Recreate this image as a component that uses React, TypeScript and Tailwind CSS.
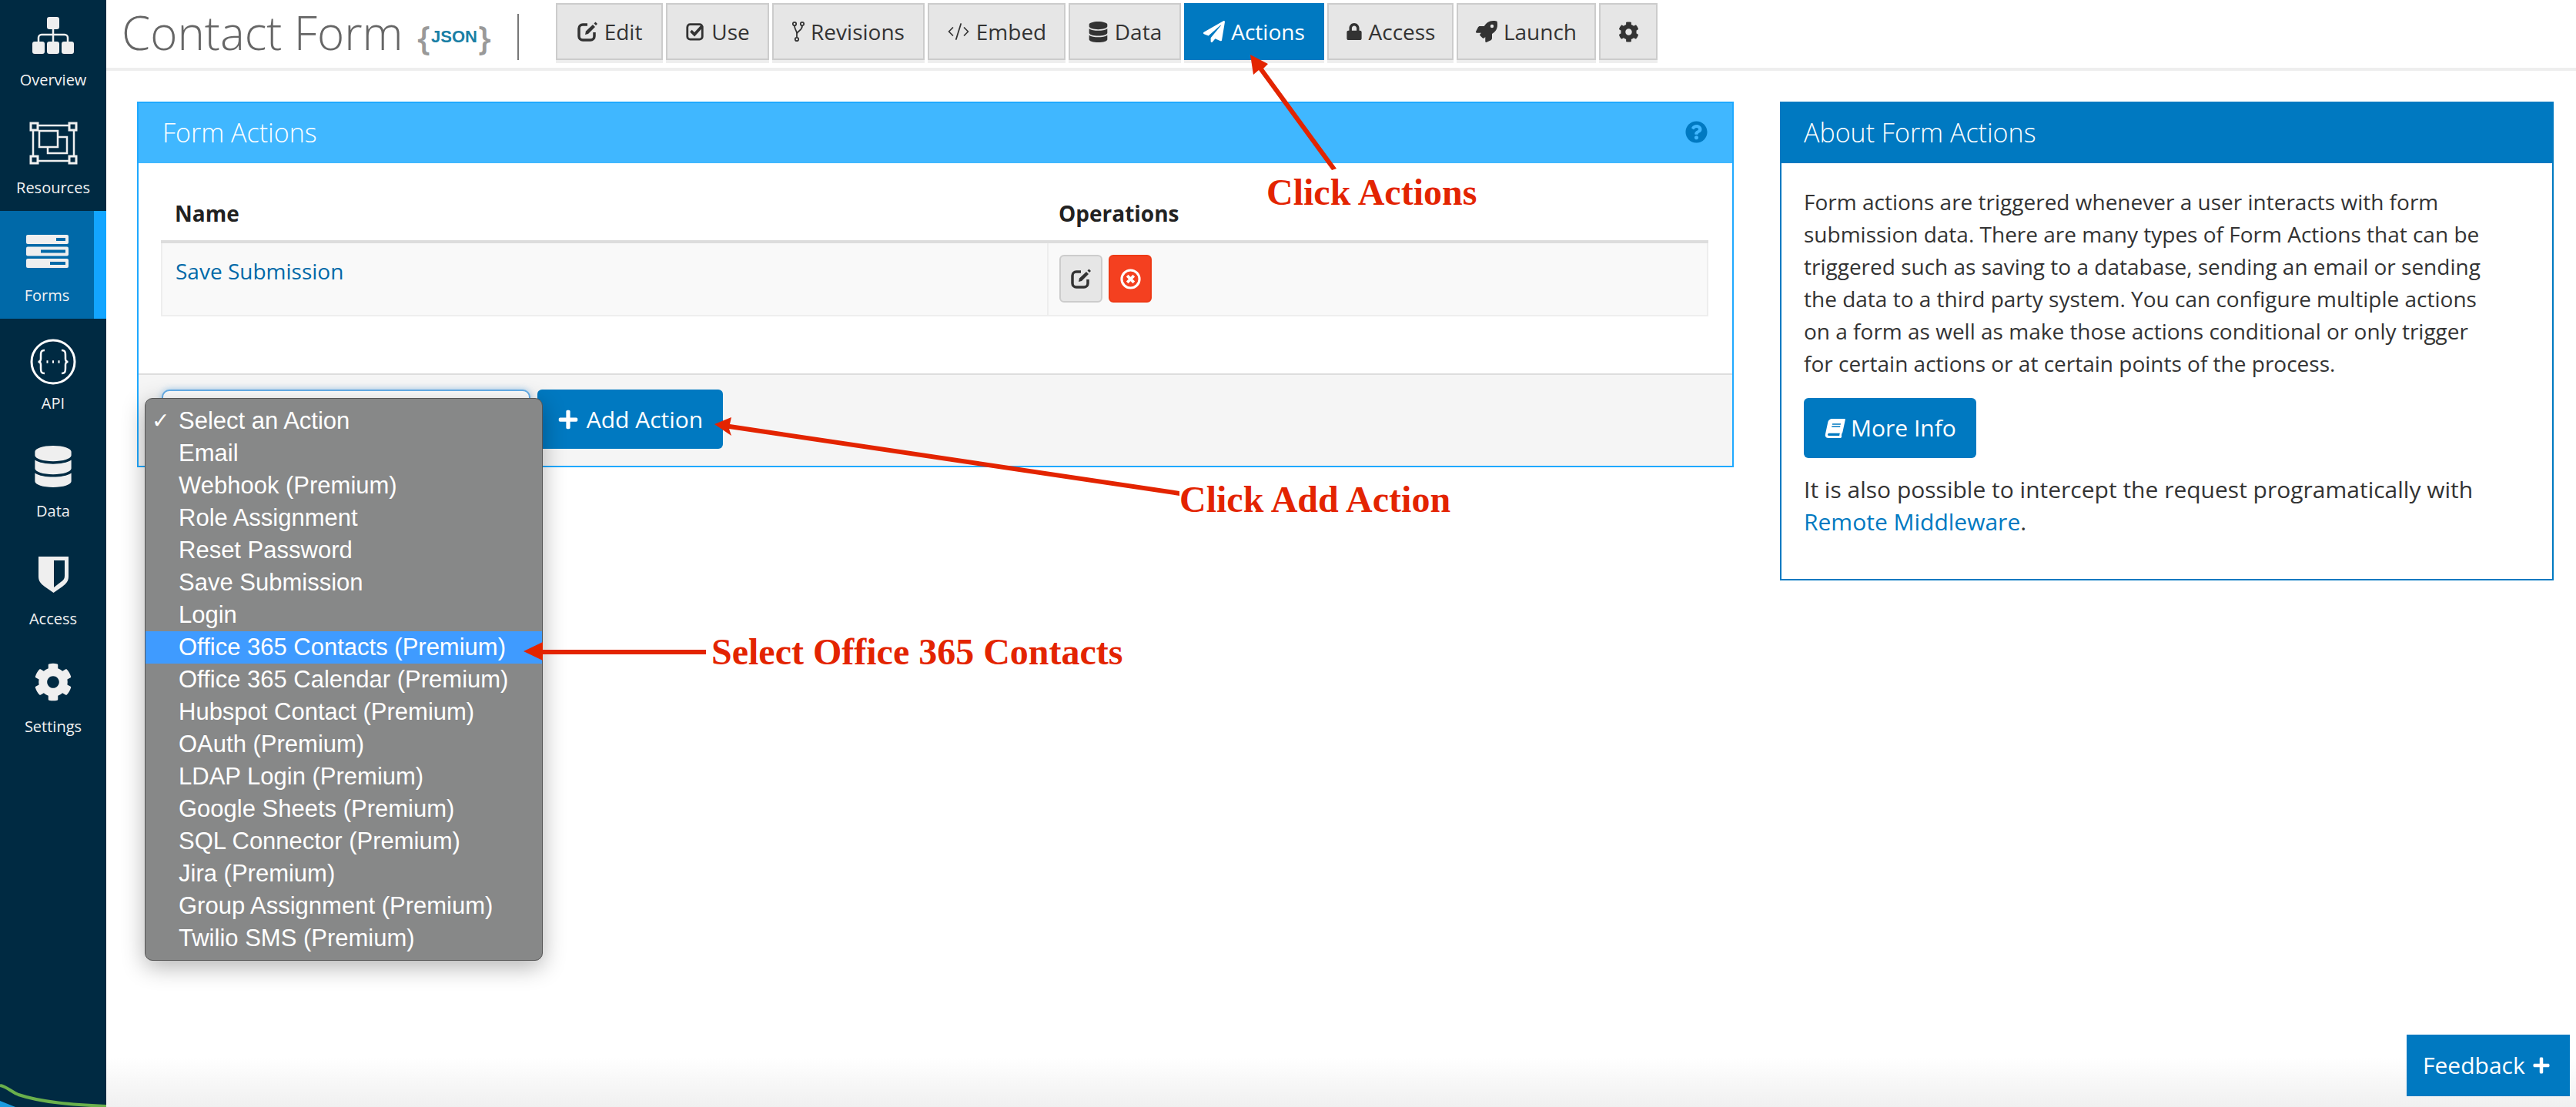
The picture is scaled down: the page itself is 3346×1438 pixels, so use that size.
import React from "react";
import {
  FaBook,
  FaCog,
  FaDatabase,
  FaLock,
  FaPaperPlane,
  FaPlus,
  FaQuestionCircle,
  FaRocket,
} from "react-icons/fa";
import { LuCodeXml } from "react-icons/lu";

function OverviewIcon() {
  return (
    <svg width="54" height="48" viewBox="0 0 54 48" fill="#efefef">
      <rect x="19" y="0" width="16" height="16" rx="3" />
      <rect x="0" y="32" width="16" height="16" rx="3" />
      <rect x="19" y="32" width="16" height="16" rx="3" />
      <rect x="38" y="32" width="16" height="16" rx="3" />
      <path d="M8 33v-6a4 4 0 0 1 4-4h30a4 4 0 0 1 4 4v6M27 15v18" fill="none" stroke="#efefef" strokeWidth="2.5" />
    </svg>
  );
}

function ResourcesIcon() {
  return (
    <svg width="63" height="56" viewBox="0 0 63 56" fill="none" stroke="#efefef">
      <rect x="5" y="5" width="53" height="46" strokeWidth="2.5" />
      <rect x="2" y="2" width="9" height="9" fill="#002a42" strokeWidth="3" />
      <rect x="52" y="2" width="9" height="9" fill="#002a42" strokeWidth="3" />
      <rect x="2" y="45" width="9" height="9" fill="#002a42" strokeWidth="3" />
      <rect x="52" y="45" width="9" height="9" fill="#002a42" strokeWidth="3" />
      <rect x="24" y="20" width="25" height="21" strokeWidth="2.5" />
      <rect x="13" y="12" width="24" height="21" fill="#002a42" strokeWidth="2.5" />
    </svg>
  );
}

function FormsIcon() {
  return (
    <svg width="55" height="43" viewBox="0 0 55 43" fill="#efefef">
      <rect x="0" y="0" width="55" height="12" rx="2" />
      <rect x="0" y="15.5" width="55" height="12" rx="2" />
      <rect x="0" y="31" width="55" height="12" rx="2" />
      <rect x="39" y="4" width="12" height="4" fill="#0069a8" />
      <rect x="19" y="19.5" width="32" height="4" fill="#0069a8" />
      <rect x="31" y="35" width="20" height="4" fill="#0069a8" />
    </svg>
  );
}

function ApiIcon() {
  return (
    <svg width="60" height="60" viewBox="0 0 60 60" fill="none" stroke="#fff">
      <circle cx="30" cy="30" r="28" strokeWidth="3" />
      <path d="M19 15c-5 0-5 3-5 7v4c0 3-1 4-3.500 4 2.500 0 3.500 1 3.500 4v4c0 4 0 7 5 7M41 15c5 0 5 3 5 7v4c0 3 1 4 3.500 4-2.500 0-3.500 1-3.500 4v4c0 4 0 7-5 7" strokeWidth="2.500" />
      <path d="M21.500 30h2M29 30h2M36.500 30h2" strokeWidth="3.500" />
    </svg>
  );
}

function ShieldIcon() {
  return (
    <svg width="39" height="47" viewBox="0 0 39 47" fill="#efefef">
      <path fillRule="evenodd" d="M0 0h39v26c0 6-3 9-8 13l-11.500 8L8 39c-5-4-8-7-8-13zM20 5v35l9-7c3-2 5-4 5-8V5z" />
    </svg>
  );
}

function EditIcon({ size }: { size: number }) {
  return (
    <svg width={size} height={size} viewBox="0 0 28 28" fill="none" stroke="currentColor">
      <path d="M14 5H8a5 5 0 0 0-5 5v10a5 5 0 0 0 5 5h10a5 5 0 0 0 5-5v-5" strokeWidth="3.500" />
      <path d="M11 18l1-4.500L21 5l3 3-9 9z" fill="currentColor" stroke="none" />
      <path d="M22.500 3.500L24.500 1.500 27 4l-2 2z" fill="currentColor" stroke="none" />
    </svg>
  );
}

function CheckBoxIcon({ size }: { size: number }) {
  return (
    <svg width={size} height={size} viewBox="0 0 28 28" fill="none" stroke="currentColor">
      <rect x="3" y="4" width="21" height="21" rx="4" strokeWidth="3" />
      <path d="M8 13l5 5 11-12" strokeWidth="4" />
    </svg>
  );
}

function ForkIcon() {
  return (
    <svg width="16" height="28" viewBox="0 0 16 28" fill="none" stroke="currentColor" strokeWidth="1.800">
      <circle cx="3" cy="4" r="2.200" />
      <circle cx="13" cy="4" r="2.200" />
      <circle cx="6" cy="24" r="2.200" />
      <path d="M3 6.500c0 5 3 6 3 10v5M13 6.500c0 6-5 6-7 10" />
    </svg>
  );
}

function RemoveIcon({ size }: { size: number }) {
  return (
    <svg width={size} height={size} viewBox="0 0 28 28" fill="none" stroke="currentColor">
      <circle cx="14" cy="14" r="12" strokeWidth="3.200" />
      <path d="M9.500 9.500l9 9M18.500 9.500l-9 9" strokeWidth="3.800" />
    </svg>
  );
}

function NavItem({ icon, label, active, first }: { icon: React.ReactNode; label: string; active?: boolean; first?: boolean }) {
  return (
    <div
      className={
        "flex flex-col items-center " +
        (first ? "h-[134px] " : "h-[140px] pt-[6px] ") +
        (active ? "bg-[#0069a8] border-r-[16px] border-[#12a5ff]" : "")
      }
    >
      <div className="flex h-[92px] items-center justify-center">{icon}</div>
      <div className="text-[20px] leading-[24px] text-[#f2f2f2]">{label}</div>
    </div>
  );
}

function Tab({ icon, label, active, w }: { icon: React.ReactNode; label?: string; active?: boolean; w: string }) {
  return (
    <div
      className={
        "flex h-[74px] items-center justify-center gap-[8px] text-[28px] " +
        w +
        (active
          ? " bg-[#0079c1] text-white shadow-[0_4px_0_#eee]"
          : " border-2 border-[#ccc] bg-[#e6e6e6] text-[#333] shadow-[0_4px_0_#eee]")
      }
    >
      {icon}
      {label}
    </div>
  );
}

const menuItems = [
  "Email",
  "Webhook (Premium)",
  "Role Assignment",
  "Reset Password",
  "Save Submission",
  "Login",
  "Office 365 Contacts (Premium)",
  "Office 365 Calendar (Premium)",
  "Hubspot Contact (Premium)",
  "OAuth (Premium)",
  "LDAP Login (Premium)",
  "Google Sheets (Premium)",
  "SQL Connector (Premium)",
  "Jira (Premium)",
  "Group Assignment (Premium)",
  "Twilio SMS (Premium)",
];

export default function App() {
  return (
    <div className="relative flex h-[1438px] w-[3346px] overflow-hidden bg-white font-['Open_Sans',sans-serif] text-[28px] leading-[42px] text-[#333]">
      <aside className="relative w-[138px] shrink-0 bg-[#002a42]">
        <NavItem first icon={<OverviewIcon />} label="Overview" />
        <NavItem icon={<ResourcesIcon />} label="Resources" />
        <NavItem active icon={<FormsIcon />} label="Forms" />
        <NavItem icon={<div className="pt-[8px]"><ApiIcon /></div>} label="API" />
        <NavItem icon={<FaDatabase size={54} color="#efefef" />} label="Data" />
        <NavItem icon={<ShieldIcon />} label="Access" />
        <NavItem icon={<FaCog size={50} color="#efefef" />} label="Settings" />
        <svg className="absolute bottom-0 left-0" width="138" height="30" viewBox="0 0 138 30" fill="none">
          <path d="M0 22 L20 30 H0Z" fill="#1a9be0" />
          <path d="M0 2c10 2 14 8 24 12 30 10 70 13 114 15" stroke="#6ab04c" strokeWidth="4" />
        </svg>
      </aside>

      <main className="flex min-w-0 flex-1 flex-col">
        <header className="flex h-[92px] shrink-0 border-b-4 border-[#eee]">
          <div className="ml-[20px] mt-[6px] w-[384px] text-[60px] font-light leading-[72px] text-[#666]">Contact Form</div>
          <div className="mt-[28px] flex h-[40px] w-[96px] items-center justify-between text-[#999]">
            <span className="text-[44px] font-semibold leading-[40px]">{"{"}</span>
            <span className="font-['Liberation_Sans',sans-serif] text-[22px] font-bold leading-[40px] text-[#1a7fa5]">JSON</span>
            <span className="text-[44px] font-semibold leading-[40px]">{"}"}</span>
          </div>
          <div className="ml-[34px] mt-[18px] h-[60px] w-[2px] bg-[#777]" />
          <nav className="ml-[48px] mt-[4px] flex gap-[4px]">
            <Tab w="w-[139px]" icon={<EditIcon size={28} />} label="Edit" />
            <Tab w="w-[134px]" icon={<CheckBoxIcon size={26} />} label="Use" />
            <Tab w="w-[198px]" icon={<ForkIcon />} label="Revisions" />
            <Tab w="w-[179px]" icon={<LuCodeXml size={30} strokeWidth={1.4} />} label="Embed" />
            <Tab w="w-[146px]" icon={<FaDatabase size={27} />} label="Data" />
            <Tab w="w-[182px]" active icon={<FaPaperPlane size={28} />} label="Actions" />
            <Tab w="w-[164px]" icon={<FaLock size={22} />} label="Access" />
            <Tab w="w-[181px]" icon={<FaRocket size={28} />} label="Launch" />
            <Tab w="w-[76px]" icon={<FaCog size={27} />} />
          </nav>
        </header>

        <div className="flex min-h-0 flex-1 items-start gap-[60px] pl-[40px] pt-[40px]">
          <section className="w-[2074px] shrink-0 border-2 border-[#1fa9ff]">
            <div className="flex h-[78px] items-center justify-between bg-[#40b7ff] pb-[3px] pl-[31px] pr-[32px] text-[34px] font-light text-white">
              Form Actions
              <FaQuestionCircle size={29} color="#0079c1" />
            </div>
            <div className="h-[273px] px-[29px] pt-[24px]">
              <table className="w-[2010px] border-collapse">
                <thead>
                  <tr className="h-[78px] border-b-4 border-[#ddd] text-left font-bold text-[#222]">
                    <th className="w-[1151px] pl-[17px] pt-[6px]">Name</th>
                    <th className="pl-[14px] pt-[6px]">Operations</th>
                  </tr>
                </thead>
                <tbody>
                  <tr className="h-[96px] border-2 border-t-0 border-[#eee] bg-[#f9f9f9] align-top">
                    <td className="border-r-2 border-[#eee] pl-[17px] pt-[15px] text-[#0069a8]">Save Submission</td>
                    <td className="pl-[14px] pt-[15px]">
                      <div className="flex gap-[8px]">
                        <button className="flex h-[62px] w-[56px] items-center justify-center rounded-[6px] border-2 border-[#ccc] bg-[#e6e6e6] text-[#333]">
                          <EditIcon size={28} />
                        </button>
                        <button className="flex h-[62px] w-[56px] items-center justify-center rounded-[6px] border-2 border-[#ee3a16] bg-[#f44020] text-white">
                          <RemoveIcon size={27} />
                        </button>
                      </div>
                    </td>
                  </tr>
                </tbody>
              </table>
            </div>
            <div className="flex h-[120px] items-start gap-[9px] border-t-2 border-[#ddd] bg-[#f5f5f5] pl-[30px] pt-[19px]">
              <div className="h-[77px] w-[479px] rounded-[10px] border-2 border-[#66afe9] bg-white shadow-[0_0_8px_rgba(102,175,233,0.6)]" />
              <button className="flex h-[77px] w-[241px] items-center justify-center gap-[10px] rounded-[6px] bg-[#0079c1] text-[30px] text-white">
                <FaPlus size={28} />
                Add Action
              </button>
            </div>
          </section>

          <section className="h-[622px] w-[1005px] shrink-0 border-2 border-[#0079c1]">
            <div className="flex h-[78px] items-center bg-[#0079c1] pb-[3px] pl-[29px] text-[34px] font-light text-white">About Form Actions</div>
            <div className="pl-[29px] pr-[72px] pt-[29px]">
              <p>
                Form actions are triggered whenever a user interacts with form submission data. There are many types of Form Actions that can be triggered such as saving to a database, sending an email or sending the data to a third party system. You can configure multiple actions on a form as well as make those actions conditional or only trigger for certain actions or at certain points of the process.
              </p>
              <button className="mt-[24px] flex h-[78px] w-[224px] items-center justify-center gap-[8px] rounded-[6px] bg-[#0079c1] pl-[2px] text-[30px] text-white">
                <FaBook size={25} className="-skew-x-12" />
                More Info
              </button>
              <p className="mt-[20px] text-[30px]">
                It is also possible to intercept the request programatically with <span className="text-[#0079c1]">Remote Middleware</span>.
              </p>
            </div>
          </section>
        </div>
        <div className="h-[64px] shrink-0 bg-gradient-to-b from-white to-[#f0f0f0]" />
      </main>

      {/* native select popup, sits over the form footer */}
      <div className="absolute left-[188px] top-[517px] h-[731px] w-[517px] rounded-[10px] border border-[#555] bg-[#878888] py-[8px] font-['Liberation_Sans',sans-serif] text-[31px] leading-[42px] text-white shadow-[0_8px_30px_rgba(0,0,0,0.3)]">
        <div className="relative pl-[43px]">
          <span className="absolute left-[8px] font-['DejaVu_Sans',sans-serif] text-[28px]">✓</span>
          Select an Action
        </div>
        {menuItems.map((item) => (
          <div key={item} className={"pl-[43px] " + (item === "Office 365 Contacts (Premium)" ? "bg-[#3f9bff]" : "")}>
            {item}
          </div>
        ))}
      </div>

      {/* red tutorial annotations */}
      <svg className="pointer-events-none absolute left-0 top-0" width="3346" height="1438" viewBox="0 0 3346 1438" fill="#e32400">
        <path d="M1624 71 L1647 83 L1641 89 L1736 219 L1730 221 L1635 91 L1628 97Z" />
        <path d="M928 551 L950 542 L948 551 L1532 638 L1532 644 L947 557 L950 566Z" />
        <path d="M680 846 L705 834 L705 844 L917 844 L917 850 L705 850 L705 858Z" />
      </svg>
      <div className="absolute left-[1645px] top-[222px] font-['Liberation_Serif',serif] text-[48px] font-bold leading-[56px] text-[#e32400]">Click Actions</div>
      <div className="absolute left-[1532px] top-[621px] font-['Liberation_Serif',serif] text-[48px] font-bold leading-[56px] text-[#e32400]">Click Add Action</div>
      <div className="absolute left-[924px] top-[819px] font-['Liberation_Serif',serif] text-[48px] font-bold leading-[56px] text-[#e32400]">Select Office 365 Contacts</div>

      <div className="absolute left-[3126px] top-[1344px] flex h-[80px] w-[212px] items-center gap-[9px] bg-[#0079c1] pl-[21px] text-[30px] text-white">
        Feedback
        <FaPlus size={24} />
      </div>
    </div>
  );
}
